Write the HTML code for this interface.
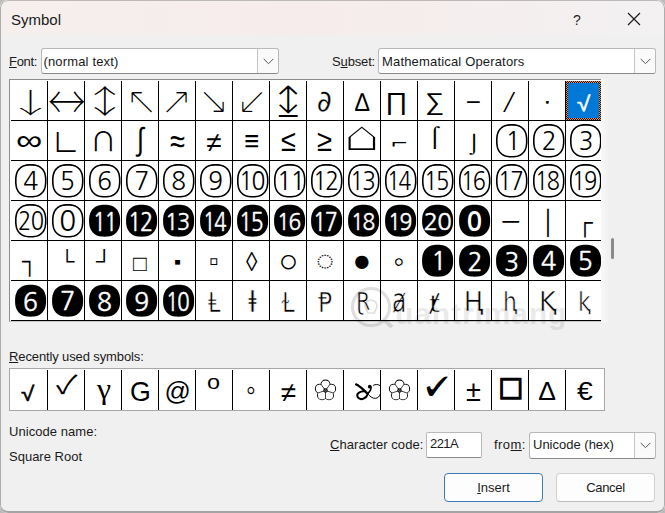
<!DOCTYPE html>
<html lang="en"><head><meta charset="utf-8"><title>Symbol</title>
<style>
html,body{margin:0;padding:0}
body{width:665px;height:513px;overflow:hidden;background:#bbb;font-family:"Liberation Sans","DejaVu Sans",sans-serif;position:relative;color:#1a1a1a}
.win{position:absolute;left:0;top:0;width:665px;height:513px;border-radius:8px;background:#f0f0f0;overflow:hidden}
.win *{position:absolute;box-sizing:border-box}
.win u,.g span{position:static}
.csvg{left:0;top:0}
.frame{left:0;top:0;width:665px;height:513px;border:1px solid #adadad;border-top-color:#bdb9b9;border-bottom:2px solid #a4a4a4;border-radius:8px;pointer-events:none}
.tb{left:0;top:0;width:665px;height:38px;background:linear-gradient(to bottom,rgba(240,240,240,0) 0,rgba(240,240,240,0) 32px,#f0f0f0 38px),linear-gradient(to right,#f5efee 0,#f6eceb 45%,#f4efef 80%,#f3f1f3 100%)}
.title{left:11px;top:10px;font-size:15px;line-height:20px;white-space:nowrap}
.help{left:573px;top:10px;font-size:15.5px;line-height:20px;transform:scaleX(.9);transform-origin:0 0}
.close{left:627px;top:12px}
.lbl{font-size:13px;line-height:15px;white-space:nowrap;color:#1a1a1a}
.combo{background:#fff;border:1px solid #b9b9b9;border-bottom-color:#8a8a8a;border-radius:3px}
.combo .ct{left:3px;top:5px;font-size:13px;line-height:15px;white-space:nowrap}
.combo .dd{right:0;top:0;width:21px;height:100%;border-left:1px solid #c4c4c4;background:#fafafa;border-radius:0 3px 3px 0}
.combo .dd svg{left:5px;top:9px}
.inp{background:#fff;border:1px solid #b9b9b9;border-bottom-color:#8a8a8a;border-radius:2px;font-size:13px;line-height:15px;padding:3px 0 0 3px}
.btn{background:#fdfdfd;border:1px solid #d0d0d0;border-bottom-color:#bcbcbc;border-radius:4px;font-size:13px;line-height:27px;text-align:center}
.btn.def{border:1px solid #3c7bb4;background:#fdfdfd}
.grid{left:9px;top:79px;width:593px;height:243px;background:#fff;border-top:1px solid #8c8c8c;border-left:1px solid #8c8c8c;border-bottom:1px solid #c8c8c8}
.gmask{left:601px;top:79px;width:9px;height:244px;background:linear-gradient(to right,#f8f8f8,#f0f0f0 8px)}
.vl{width:1px;top:81px;height:240px;background:#000}
.hl{height:1px;left:11px;width:591px;background:#000}
.g{white-space:nowrap;transform-origin:0 0;color:#000}
.sel{left:566px;top:81px;width:35px;height:39px;background:repeating-conic-gradient(#1c1408 0% 25%,#e8914a 0% 50%) 0 0/2px 2px}
.sel::after{content:"";position:absolute;left:2px;top:2px;right:2px;bottom:2px;background:#0078d7}
.sb{left:611px;top:238px;width:3px;height:21px;background:#8a8a8a;border-radius:2px}
.rgrid{left:9px;top:368px;width:596px;height:43px;background:#fff;border:1px solid #a8a8a8}
.rvl{top:370px;width:1px;height:40px;background:#000}
.tam{left:355px;top:383px}
.wm{left:350px;top:286px;width:230px;height:46px;opacity:.12}
.wm svg{left:0;top:0}
.wm span{left:45px;top:10px;font-size:30px;line-height:36px;font-weight:bold;letter-spacing:0.9px;color:#000;opacity:.65}

</style></head><body>
<div class="win">
<div class="tb"></div>
<div class="title">Symbol</div>
<div class="help">?</div>
<svg class="close" width="14" height="14" viewBox="0 0 14 14"><path d="M1 1L13 13M13 1L1 13" stroke="#1b1b1b" stroke-width="1.2" fill="none"/></svg>

<div class="lbl" style="left:9px;top:54px;letter-spacing:-0.3px"><u>F</u>ont:</div>
<div class="combo" style="left:41px;top:48px;width:238px;height:26px"><span class="ct" style="letter-spacing:0.15px;margin-left:-1.5px">(normal text)</span><span class="dd"><svg width="11" height="7" viewBox="0 0 11 7"><path d="M0.7 0.9L5.5 5.7L10.3 0.9" stroke="#555" stroke-width="1" fill="none"/></svg></span></div>
<div class="lbl" style="left:332px;top:54px;letter-spacing:-0.15px">S<u>u</u>bset:</div>
<div class="combo" style="left:378px;top:48px;width:278px;height:26px"><span class="ct" style="letter-spacing:0.17px">Mathematical Operators</span><span class="dd"><svg width="11" height="7" viewBox="0 0 11 7"><path d="M0.7 0.9L5.5 5.7L10.3 0.9" stroke="#555" stroke-width="1" fill="none"/></svg></span></div>

<div class="grid"></div>
<div class="sel"></div>
<span class="g" style="left:6.83px;top:88.07px;font-size:35.97px;line-height:35.97px;font-family:'Noto Sans CJK JP',sans-serif;font-weight:100;transform:scale(1.308,0.765);">↓</span>
<span class="g" style="left:48.20px;top:76.59px;font-size:41.49px;line-height:41.49px;font-family:'Noto Sans CJK JP',sans-serif;font-weight:100;transform:scale(0.906,1.103);">↔</span>
<span class="g" style="left:81.67px;top:83.07px;font-size:38.40px;line-height:38.40px;font-family:'Noto Sans CJK JP',sans-serif;font-weight:100;transform:scale(1.189,0.841);">↕</span>
<span class="g" style="left:124.76px;top:80.97px;font-size:40.82px;line-height:40.82px;font-family:'DejaVu Sans',sans-serif;-webkit-text-stroke:1.90px #fff;">↖</span>
<span class="g" style="left:159.20px;top:80.97px;font-size:40.82px;line-height:40.82px;font-family:'DejaVu Sans',sans-serif;-webkit-text-stroke:1.90px #fff;">↗</span>
<span class="g" style="left:196.56px;top:80.34px;font-size:40.20px;line-height:40.20px;font-family:'DejaVu Sans',sans-serif;-webkit-text-stroke:1.90px #fff;">↘</span>
<span class="g" style="left:235.50px;top:79.60px;font-size:40.00px;line-height:40.00px;font-family:'DejaVu Sans',sans-serif;-webkit-text-stroke:1.90px #fff;">↙</span>
<span class="g" style="left:267.20px;top:80.38px;font-size:45.51px;line-height:45.51px;font-family:'DejaVu Sans',sans-serif;-webkit-text-stroke:1.80px #fff;transform:scale(1.099,1.000);">↨</span>
<span class="g" style="left:316.84px;top:86.93px;font-size:29.25px;line-height:29.25px;font-family:'DejaVu Sans',sans-serif;-webkit-text-stroke:0.30px #fff;">∂</span>
<span class="g" style="left:355.00px;top:89.75px;font-size:25.65px;line-height:25.65px;font-family:'Liberation Sans',sans-serif;transform:scale(0.914,1.000);">∆</span>
<span class="g" style="left:385.38px;top:90.09px;font-size:24.44px;line-height:24.44px;font-family:'Liberation Sans',sans-serif;transform:scale(1.130,1.000);">∏</span>
<span class="g" style="left:424.90px;top:90.09px;font-size:24.44px;line-height:24.44px;font-family:'Liberation Sans',sans-serif;transform:scale(1.098,1.000);">∑</span>
<span class="g" style="left:465.70px;top:89.95px;font-size:25.92px;line-height:25.92px;font-family:'Liberation Sans',sans-serif;">−</span>
<span class="g" style="left:507.78px;top:87.76px;font-size:26.31px;line-height:26.31px;font-family:'Liberation Sans',sans-serif;transform:scale(0.908,1.102);">∕</span>
<span class="g" style="left:543.87px;top:89.09px;font-size:27.00px;line-height:27.00px;font-family:'Liberation Sans',sans-serif;transform:scale(1.000,0.909);">∙</span>
<span class="g" style="left:576.76px;top:93.96px;font-size:20.73px;line-height:20.73px;font-family:'Liberation Sans',sans-serif;color:#fff;-webkit-text-stroke:0.50px #fff;transform:scale(1.166,1.000);">√</span>
<span class="g" style="left:15.81px;top:125.59px;font-size:32.79px;line-height:32.79px;font-family:'Liberation Sans',sans-serif;transform:scale(1.133,0.883);">∞</span>
<span class="g" style="left:52.51px;top:127.93px;font-size:26.49px;line-height:26.49px;font-family:'Noto Sans CJK JP',sans-serif;">∟</span>
<span class="g" style="left:90.28px;top:127.00px;font-size:26.13px;line-height:26.13px;font-family:'Noto Sans CJK JP',sans-serif;">∩</span>
<span class="g" style="left:136.96px;top:123.13px;font-size:28.17px;line-height:28.17px;font-family:'Liberation Sans',sans-serif;transform:scale(0.892,1.121);">∫</span>
<span class="g" style="left:169.89px;top:123.93px;font-size:30.55px;line-height:30.55px;font-family:'Liberation Sans',sans-serif;transform:scale(0.889,1.125);">≈</span>
<span class="g" style="left:206.35px;top:128.73px;font-size:27.83px;line-height:27.83px;font-family:'Liberation Sans',sans-serif;">≠</span>
<span class="g" style="left:244.01px;top:125.92px;font-size:29.29px;line-height:29.29px;font-family:'Liberation Sans',sans-serif;transform:scale(0.882,1.000);">≡</span>
<span class="g" style="left:280.89px;top:125.38px;font-size:30.50px;line-height:30.50px;font-family:'Liberation Sans',sans-serif;transform:scale(0.890,1.000);">≤</span>
<span class="g" style="left:317.48px;top:125.38px;font-size:30.50px;line-height:30.50px;font-family:'Liberation Sans',sans-serif;transform:scale(0.897,1.000);">≥</span>
<span class="g" style="left:342.96px;top:115.17px;font-size:50.71px;line-height:50.71px;font-family:'DejaVu Sans',sans-serif;-webkit-text-stroke:2.20px #fff;transform:scale(1.170,0.855);">⌂</span>
<span class="g" style="left:391.31px;top:133.81px;font-size:27.71px;line-height:27.71px;font-family:'Liberation Sans',sans-serif;transform:scale(1.000,0.593);">⌐</span>
<span class="g" style="left:425.89px;top:125.90px;font-size:23.96px;line-height:23.96px;font-family:'Liberation Sans',sans-serif;transform:scale(1.193,0.839);">⌠</span>
<span class="g" style="left:466.23px;top:133.63px;font-size:22.26px;line-height:22.26px;font-family:'Liberation Sans',sans-serif;transform:scale(1.198,0.835);">⌡</span>
<span class="g" style="left:502.53px;top:209.61px;font-size:23.19px;line-height:23.19px;font-family:'Liberation Sans',sans-serif;">─</span>
<span class="g" style="left:541.85px;top:210.70px;font-size:23.39px;line-height:23.39px;font-family:'Liberation Sans',sans-serif;">│</span>
<span class="g" style="left:576.64px;top:210.27px;font-size:24.38px;line-height:24.38px;font-family:'Liberation Sans',sans-serif;transform:scale(0.905,1.000);">┌</span>
<span class="g" style="left:22.30px;top:248.91px;font-size:24.69px;line-height:24.69px;font-family:'Liberation Sans',sans-serif;transform:scale(0.872,1.000);">┐</span>
<span class="g" style="left:59.80px;top:250.95px;font-size:20.78px;line-height:20.78px;font-family:'Liberation Sans',sans-serif;">└</span>
<span class="g" style="left:95.70px;top:250.95px;font-size:20.78px;line-height:20.78px;font-family:'Liberation Sans',sans-serif;transform:scale(1.110,1.000);">┘</span>
<span class="g" style="left:132.95px;top:252.72px;font-size:22.33px;line-height:22.33px;font-family:'Liberation Sans',sans-serif;">□</span>
<span class="g" style="left:173.70px;top:253.14px;font-size:18.80px;line-height:18.80px;font-family:'Liberation Sans',sans-serif;transform:scale(1.064,1.000);">▪</span>
<span class="g" style="left:209.31px;top:247.86px;font-size:26.80px;line-height:26.80px;font-family:'Liberation Sans',sans-serif;">▫</span>
<span class="g" style="left:245.77px;top:248.23px;font-size:24.94px;line-height:24.94px;font-family:'Liberation Sans',sans-serif;transform:scale(0.919,1.088);">◊</span>
<span class="g" style="left:278.61px;top:244.62px;font-size:32.95px;line-height:32.95px;font-family:'Liberation Sans',sans-serif;">○</span>
<span class="g" style="left:316.17px;top:246.13px;font-size:28.60px;line-height:28.60px;font-family:'Liberation Sans',sans-serif;transform:scale(1.070,1.000);">◌</span>
<span class="g" style="left:352.57px;top:245.72px;font-size:30.93px;line-height:30.93px;font-family:'Liberation Sans',sans-serif;">●</span>
<span class="g" style="left:393.23px;top:244.53px;font-size:32.08px;line-height:32.08px;font-family:'Liberation Sans',sans-serif;">◦</span>
<span class="g" style="left:207.90px;top:289.69px;font-size:24.54px;line-height:24.54px;font-family:'DejaVu Sans',sans-serif;-webkit-text-stroke:0.60px #fff;transform:scale(0.917,1.091);">Ⱡ</span>
<span class="g" style="left:247.66px;top:289.19px;font-size:27.84px;line-height:27.84px;font-family:'DejaVu Sans',sans-serif;-webkit-text-stroke:0.60px #fff;transform:scale(1.153,1.000);">ⱡ</span>
<span class="g" style="left:281.93px;top:289.89px;font-size:24.76px;line-height:24.76px;font-family:'DejaVu Sans',sans-serif;-webkit-text-stroke:0.60px #fff;transform:scale(0.925,1.081);">Ɫ</span>
<span class="g" style="left:317.83px;top:289.89px;font-size:26.76px;line-height:26.76px;font-family:'DejaVu Sans',sans-serif;-webkit-text-stroke:0.60px #fff;transform:scale(0.879,1.000);">Ᵽ</span>
<span class="g" style="left:356.12px;top:289.19px;font-size:22.65px;line-height:22.65px;font-family:'DejaVu Sans',sans-serif;-webkit-text-stroke:0.60px #fff;transform:scale(0.916,1.091);">Ɽ</span>
<span class="g" style="left:391.90px;top:285.33px;font-size:27.93px;line-height:27.93px;font-family:'DejaVu Sans',sans-serif;-webkit-text-stroke:0.60px #fff;transform:scale(0.838,1.194);">ⱥ</span>
<span class="g" style="left:429.11px;top:292.83px;font-size:25.34px;line-height:25.34px;font-family:'DejaVu Sans',sans-serif;-webkit-text-stroke:0.60px #fff;transform:scale(1.128,0.887);">ⱦ</span>
<span class="g" style="left:463.71px;top:290.21px;font-size:25.75px;line-height:25.75px;font-family:'DejaVu Sans',sans-serif;-webkit-text-stroke:0.60px #fff;">Ⱨ</span>
<span class="g" style="left:502.51px;top:289.05px;font-size:24.43px;line-height:24.43px;font-family:'DejaVu Sans',sans-serif;-webkit-text-stroke:0.60px #fff;transform:scale(0.896,1.116);">ⱨ</span>
<span class="g" style="left:539.09px;top:290.21px;font-size:25.75px;line-height:25.75px;font-family:'DejaVu Sans',sans-serif;-webkit-text-stroke:0.60px #fff;">Ⱪ</span>
<span class="g" style="left:578.13px;top:288.95px;font-size:24.35px;line-height:24.35px;font-family:'DejaVu Sans',sans-serif;-webkit-text-stroke:0.60px #fff;transform:scale(0.893,1.120);">ⱪ</span>
<svg class="csvg" width="602" height="322" viewBox="0 0 602 322"><defs><path id="sqo" d="M30.7 16.7L30.7 19.0L30.5 20.6L30.3 22.1L30.0 23.4L29.6 24.7L29.1 25.8L28.5 26.9L27.8 27.9L27.1 28.7L26.2 29.5L25.3 30.3L24.3 30.9L23.3 31.4L22.1 31.8L20.8 32.2L19.4 32.4L17.9 32.6L15.8 32.6L13.6 32.6L12.1 32.4L10.7 32.2L9.4 31.8L8.2 31.4L7.2 30.9L6.2 30.3L5.3 29.5L4.4 28.7L3.7 27.9L3.0 26.9L2.4 25.8L1.9 24.7L1.5 23.4L1.2 22.1L1.0 20.6L0.8 19.0L0.8 16.7L0.8 14.4L1.0 12.8L1.2 11.3L1.5 10.0L1.9 8.7L2.4 7.6L3.0 6.5L3.7 5.5L4.4 4.7L5.3 3.9L6.2 3.1L7.2 2.5L8.2 2.0L9.4 1.6L10.7 1.2L12.1 1.0L13.6 0.8L15.7 0.8L17.9 0.8L19.4 1.0L20.8 1.2L22.1 1.6L23.3 2.0L24.3 2.5L25.3 3.1L26.2 3.9L27.1 4.7L27.8 5.5L28.5 6.5L29.1 7.6L29.6 8.7L30.0 10.0L30.3 11.3L30.5 12.8L30.7 14.4Z" fill="#fff" stroke="#000" stroke-width="1.600"/><path id="sqb" d="M31.0 16.0L31.0 18.1L30.8 19.7L30.6 21.2L30.2 22.5L29.8 23.8L29.2 25.0L28.6 26.1L27.9 27.1L27.1 28.0L26.2 28.8L25.3 29.5L24.2 30.2L23.1 30.7L21.8 31.2L20.5 31.5L19.1 31.8L17.5 31.9L15.5 32.0L13.5 31.9L11.9 31.8L10.5 31.5L9.2 31.2L7.9 30.7L6.8 30.2L5.7 29.5L4.8 28.8L3.9 28.0L3.1 27.1L2.4 26.1L1.8 25.0L1.2 23.8L0.8 22.5L0.4 21.2L0.2 19.7L0.0 18.1L0.0 16.0L0.0 13.9L0.2 12.3L0.4 10.8L0.8 9.5L1.2 8.2L1.8 7.0L2.4 5.9L3.1 4.9L3.9 4.0L4.8 3.2L5.7 2.5L6.8 1.8L7.9 1.3L9.2 0.8L10.5 0.5L11.9 0.2L13.5 0.1L15.5 0.0L17.5 0.1L19.1 0.2L20.5 0.5L21.8 0.8L23.1 1.3L24.2 1.8L25.3 2.5L26.2 3.2L27.1 4.0L27.9 4.9L28.6 5.9L29.2 7.0L29.8 8.2L30.2 9.5L30.6 10.8L30.8 12.3L31.0 13.9Z" fill="#000"/></defs><use href="#sqo" x="496.0" y="124.1"/><use href="#sqo" x="533.0" y="124.1"/><use href="#sqo" x="570.0" y="124.1"/><use href="#sqo" x="15.0" y="164.1"/><use href="#sqo" x="52.0" y="164.1"/><use href="#sqo" x="89.0" y="164.1"/><use href="#sqo" x="126.0" y="164.1"/><use href="#sqo" x="163.0" y="164.1"/><use href="#sqo" x="200.0" y="164.1"/><use href="#sqo" x="237.0" y="164.1"/><use href="#sqo" x="274.0" y="164.1"/><use href="#sqo" x="311.0" y="164.1"/><use href="#sqo" x="348.0" y="164.1"/><use href="#sqo" x="385.0" y="164.1"/><use href="#sqo" x="422.0" y="164.1"/><use href="#sqo" x="459.0" y="164.1"/><use href="#sqo" x="496.0" y="164.1"/><use href="#sqo" x="533.0" y="164.1"/><use href="#sqo" x="570.0" y="164.1"/><use href="#sqo" x="15.0" y="204.1"/><use href="#sqo" x="52.0" y="204.1"/><use href="#sqb" x="89.1" y="204.7"/><use href="#sqb" x="126.1" y="204.7"/><use href="#sqb" x="163.1" y="204.7"/><use href="#sqb" x="200.1" y="204.7"/><use href="#sqb" x="237.1" y="204.7"/><use href="#sqb" x="274.1" y="204.7"/><use href="#sqb" x="311.1" y="204.7"/><use href="#sqb" x="348.1" y="204.7"/><use href="#sqb" x="385.1" y="204.7"/><use href="#sqb" x="422.1" y="204.7"/><use href="#sqb" x="459.1" y="204.7"/><use href="#sqb" x="422.1" y="244.7"/><use href="#sqb" x="459.1" y="244.7"/><use href="#sqb" x="496.1" y="244.7"/><use href="#sqb" x="533.1" y="244.7"/><use href="#sqb" x="570.1" y="244.7"/><use href="#sqb" x="15.1" y="284.7"/><use href="#sqb" x="52.1" y="284.7"/><use href="#sqb" x="89.1" y="284.7"/><use href="#sqb" x="126.1" y="284.7"/><use href="#sqb" x="163.1" y="284.7"/></svg>
<span class="g" style="left:505.39px;top:130.11px;font-size:24.93px;line-height:24.93px;font-family:'NanumGothic','Noto Sans CJK JP',sans-serif;"><span style="letter-spacing:0">1</span></span>
<span class="g" style="left:541.74px;top:130.39px;font-size:24.61px;line-height:24.61px;font-family:'NanumGothic','Noto Sans CJK JP',sans-serif;"><span style="letter-spacing:0">2</span></span>
<span class="g" style="left:578.71px;top:129.07px;font-size:24.29px;line-height:24.29px;font-family:'NanumGothic','Noto Sans CJK JP',sans-serif;"><span style="letter-spacing:0">3</span></span>
<span class="g" style="left:23.27px;top:169.86px;font-size:24.93px;line-height:24.93px;font-family:'NanumGothic','Noto Sans CJK JP',sans-serif;"><span style="letter-spacing:0">4</span></span>
<span class="g" style="left:60.00px;top:170.14px;font-size:24.61px;line-height:24.61px;font-family:'NanumGothic','Noto Sans CJK JP',sans-serif;"><span style="letter-spacing:0">5</span></span>
<span class="g" style="left:97.22px;top:169.07px;font-size:24.29px;line-height:24.29px;font-family:'NanumGothic','Noto Sans CJK JP',sans-serif;"><span style="letter-spacing:0">6</span></span>
<span class="g" style="left:134.27px;top:170.11px;font-size:24.93px;line-height:24.93px;font-family:'NanumGothic','Noto Sans CJK JP',sans-serif;"><span style="letter-spacing:0">7</span></span>
<span class="g" style="left:171.34px;top:169.07px;font-size:24.29px;line-height:24.29px;font-family:'NanumGothic','Noto Sans CJK JP',sans-serif;"><span style="letter-spacing:0">8</span></span>
<span class="g" style="left:208.34px;top:169.07px;font-size:24.29px;line-height:24.29px;font-family:'NanumGothic','Noto Sans CJK JP',sans-serif;"><span style="letter-spacing:0">9</span></span>
<span class="g" style="left:238.54px;top:170.14px;font-size:24.61px;line-height:24.61px;font-family:'NanumGothic','Noto Sans CJK JP',sans-serif;transform:scale(0.931,1.000);"><span style="letter-spacing:-0.06em">1</span><span style="letter-spacing:-0.03em">0</span></span>
<span class="g" style="left:276.66px;top:170.11px;font-size:24.93px;line-height:24.93px;font-family:'NanumGothic','Noto Sans CJK JP',sans-serif;"><span style="letter-spacing:-0.06em">1</span><span style="letter-spacing:-0.06em">1</span></span>
<span class="g" style="left:313.18px;top:170.39px;font-size:24.61px;line-height:24.61px;font-family:'NanumGothic','Noto Sans CJK JP',sans-serif;transform:scale(0.919,1.000);"><span style="letter-spacing:-0.06em">1</span><span style="letter-spacing:-0.03em">2</span></span>
<span class="g" style="left:350.18px;top:169.07px;font-size:24.29px;line-height:24.29px;font-family:'NanumGothic','Noto Sans CJK JP',sans-serif;transform:scale(0.931,1.000);"><span style="letter-spacing:-0.06em">1</span><span style="letter-spacing:-0.03em">3</span></span>
<span class="g" style="left:387.38px;top:170.14px;font-size:22.85px;line-height:22.85px;font-family:'NanumGothic','Noto Sans CJK JP',sans-serif;transform:scale(0.929,1.077);"><span style="letter-spacing:-0.06em">1</span><span style="letter-spacing:-0.03em">4</span></span>
<span class="g" style="left:424.25px;top:170.14px;font-size:24.61px;line-height:24.61px;font-family:'NanumGothic','Noto Sans CJK JP',sans-serif;transform:scale(0.899,1.000);"><span style="letter-spacing:-0.06em">1</span><span style="letter-spacing:-0.03em">5</span></span>
<span class="g" style="left:461.32px;top:169.07px;font-size:24.29px;line-height:24.29px;font-family:'NanumGothic','Noto Sans CJK JP',sans-serif;transform:scale(0.892,1.000);"><span style="letter-spacing:-0.06em">1</span><span style="letter-spacing:-0.03em">6</span></span>
<span class="g" style="left:498.22px;top:170.11px;font-size:24.93px;line-height:24.93px;font-family:'NanumGothic','Noto Sans CJK JP',sans-serif;transform:scale(0.897,1.000);"><span style="letter-spacing:-0.06em">1</span><span style="letter-spacing:-0.03em">7</span></span>
<span class="g" style="left:535.32px;top:169.07px;font-size:24.29px;line-height:24.29px;font-family:'NanumGothic','Noto Sans CJK JP',sans-serif;transform:scale(0.892,1.000);"><span style="letter-spacing:-0.06em">1</span><span style="letter-spacing:-0.03em">8</span></span>
<span class="g" style="left:572.28px;top:169.07px;font-size:24.29px;line-height:24.29px;font-family:'NanumGothic','Noto Sans CJK JP',sans-serif;transform:scale(0.902,1.000);"><span style="letter-spacing:-0.06em">1</span><span style="letter-spacing:-0.03em">9</span></span>
<span class="g" style="left:17.68px;top:209.07px;font-size:24.29px;line-height:24.29px;font-family:'NanumGothic','Noto Sans CJK JP',sans-serif;transform:scale(0.904,1.000);"><span style="letter-spacing:-0.03em">2</span><span style="letter-spacing:-0.03em">0</span></span>
<span class="g" style="left:59.24px;top:207.63px;font-size:27.89px;line-height:27.89px;font-family:'NanumGothic','Noto Sans CJK JP',sans-serif;"><span style="letter-spacing:0">0</span></span>
<span class="g" style="left:92.67px;top:209.53px;font-size:22.77px;line-height:22.77px;font-family:'NanumGothic','Noto Sans CJK JP',sans-serif;color:#fff;-webkit-text-stroke:0.45px #fff;transform:scale(0.923,1.084);"><span style="letter-spacing:-0.06em">1</span><span style="letter-spacing:-0.06em">1</span></span>
<span class="g" style="left:127.61px;top:210.81px;font-size:24.36px;line-height:24.36px;font-family:'NanumGothic','Noto Sans CJK JP',sans-serif;color:#fff;-webkit-text-stroke:0.45px #fff;transform:scale(0.895,1.000);"><span style="letter-spacing:-0.06em">1</span><span style="letter-spacing:-0.03em">2</span></span>
<span class="g" style="left:164.61px;top:208.84px;font-size:24.05px;line-height:24.05px;font-family:'NanumGothic','Noto Sans CJK JP',sans-serif;color:#fff;-webkit-text-stroke:0.45px #fff;transform:scale(0.907,1.000);"><span style="letter-spacing:-0.06em">1</span><span style="letter-spacing:-0.03em">3</span></span>
<span class="g" style="left:202.69px;top:209.56px;font-size:22.35px;line-height:22.35px;font-family:'NanumGothic','Noto Sans CJK JP',sans-serif;color:#fff;-webkit-text-stroke:0.45px #fff;transform:scale(0.917,1.090);"><span style="letter-spacing:-0.06em">1</span><span style="letter-spacing:-0.03em">4</span></span>
<span class="g" style="left:238.67px;top:210.56px;font-size:24.36px;line-height:24.36px;font-family:'NanumGothic','Noto Sans CJK JP',sans-serif;color:#fff;-webkit-text-stroke:0.45px #fff;transform:scale(0.877,1.000);"><span style="letter-spacing:-0.06em">1</span><span style="letter-spacing:-0.03em">5</span></span>
<span class="g" style="left:276.63px;top:208.84px;font-size:24.05px;line-height:24.05px;font-family:'NanumGothic','Noto Sans CJK JP',sans-serif;color:#fff;-webkit-text-stroke:0.45px #fff;transform:scale(0.870,1.000);"><span style="letter-spacing:-0.06em">1</span><span style="letter-spacing:-0.03em">6</span></span>
<span class="g" style="left:312.64px;top:210.53px;font-size:24.68px;line-height:24.68px;font-family:'NanumGothic','Noto Sans CJK JP',sans-serif;color:#fff;-webkit-text-stroke:0.45px #fff;transform:scale(0.875,1.000);"><span style="letter-spacing:-0.06em">1</span><span style="letter-spacing:-0.03em">7</span></span>
<span class="g" style="left:350.63px;top:208.84px;font-size:24.05px;line-height:24.05px;font-family:'NanumGothic','Noto Sans CJK JP',sans-serif;color:#fff;-webkit-text-stroke:0.45px #fff;transform:scale(0.870,1.000);"><span style="letter-spacing:-0.06em">1</span><span style="letter-spacing:-0.03em">8</span></span>
<span class="g" style="left:387.60px;top:208.84px;font-size:24.05px;line-height:24.05px;font-family:'NanumGothic','Noto Sans CJK JP',sans-serif;color:#fff;-webkit-text-stroke:0.45px #fff;transform:scale(0.879,1.000);"><span style="letter-spacing:-0.06em">1</span><span style="letter-spacing:-0.03em">9</span></span>
<span class="g" style="left:423.41px;top:208.84px;font-size:24.05px;line-height:24.05px;font-family:'NanumGothic','Noto Sans CJK JP',sans-serif;color:#fff;-webkit-text-stroke:0.45px #fff;"><span style="letter-spacing:-0.03em">2</span><span style="letter-spacing:-0.03em">0</span></span>
<span class="g" style="left:466.55px;top:210.02px;font-size:25.97px;line-height:25.97px;font-family:'NanumGothic','Noto Sans CJK JP',sans-serif;font-weight:700;color:#fff;"><span style="letter-spacing:0">0</span></span>
<span class="g" style="left:431.18px;top:249.28px;font-size:25.19px;line-height:25.19px;font-family:'NanumGothic','Noto Sans CJK JP',sans-serif;color:#fff;-webkit-text-stroke:0.45px #fff;"><span style="letter-spacing:0">1</span></span>
<span class="g" style="left:467.51px;top:250.56px;font-size:24.87px;line-height:24.87px;font-family:'NanumGothic','Noto Sans CJK JP',sans-serif;color:#fff;-webkit-text-stroke:0.45px #fff;"><span style="letter-spacing:0">2</span></span>
<span class="g" style="left:504.36px;top:250.59px;font-size:24.56px;line-height:24.56px;font-family:'NanumGothic','Noto Sans CJK JP',sans-serif;color:#fff;-webkit-text-stroke:0.45px #fff;"><span style="letter-spacing:0">3</span></span>
<span class="g" style="left:540.92px;top:249.03px;font-size:25.19px;line-height:25.19px;font-family:'NanumGothic','Noto Sans CJK JP',sans-serif;color:#fff;-webkit-text-stroke:0.45px #fff;"><span style="letter-spacing:0">4</span></span>
<span class="g" style="left:577.77px;top:250.31px;font-size:24.87px;line-height:24.87px;font-family:'NanumGothic','Noto Sans CJK JP',sans-serif;color:#fff;-webkit-text-stroke:0.45px #fff;"><span style="letter-spacing:0">5</span></span>
<span class="g" style="left:22.99px;top:290.59px;font-size:24.56px;line-height:24.56px;font-family:'NanumGothic','Noto Sans CJK JP',sans-serif;color:#fff;-webkit-text-stroke:0.45px #fff;"><span style="letter-spacing:0">6</span></span>
<span class="g" style="left:60.04px;top:289.28px;font-size:25.19px;line-height:25.19px;font-family:'NanumGothic','Noto Sans CJK JP',sans-serif;color:#fff;-webkit-text-stroke:0.45px #fff;"><span style="letter-spacing:0">7</span></span>
<span class="g" style="left:97.11px;top:290.59px;font-size:24.56px;line-height:24.56px;font-family:'NanumGothic','Noto Sans CJK JP',sans-serif;color:#fff;-webkit-text-stroke:0.45px #fff;"><span style="letter-spacing:0">8</span></span>
<span class="g" style="left:134.23px;top:290.59px;font-size:24.56px;line-height:24.56px;font-family:'NanumGothic','Noto Sans CJK JP',sans-serif;color:#fff;-webkit-text-stroke:0.45px #fff;"><span style="letter-spacing:0">9</span></span>
<span class="g" style="left:165.95px;top:289.56px;font-size:22.30px;line-height:22.30px;font-family:'NanumGothic','Noto Sans CJK JP',sans-serif;color:#fff;-webkit-text-stroke:0.45px #fff;transform:scale(0.915,1.093);"><span style="letter-spacing:-0.06em">1</span><span style="letter-spacing:-0.03em">0</span></span>
<i class="vl" style="left:47px"></i>
<i class="vl" style="left:84px"></i>
<i class="vl" style="left:121px"></i>
<i class="vl" style="left:158px"></i>
<i class="vl" style="left:195px"></i>
<i class="vl" style="left:232px"></i>
<i class="vl" style="left:269px"></i>
<i class="vl" style="left:306px"></i>
<i class="vl" style="left:343px"></i>
<i class="vl" style="left:380px"></i>
<i class="vl" style="left:417px"></i>
<i class="vl" style="left:454px"></i>
<i class="vl" style="left:491px"></i>
<i class="vl" style="left:528px"></i>
<i class="vl" style="left:565px"></i>
<i class="hl" style="top:120px"></i>
<i class="hl" style="top:160px"></i>
<i class="hl" style="top:200px"></i>
<i class="hl" style="top:240px"></i>
<i class="hl" style="top:280px"></i>
<i class="hl" style="top:320px"></i>
<div class="gmask"></div>
<div class="sb"></div>

<div class="lbl" style="left:9px;top:349px;letter-spacing:-0.12px"><u>R</u>ecently used symbols:</div>
<div class="rgrid"></div>
<span class="g" style="left:21.46px;top:383.83px;font-size:22.19px;line-height:22.19px;font-family:'Liberation Sans',sans-serif;-webkit-text-stroke:0.60px #000;transform:scale(1.090,0.918);">√</span>
<span class="g" style="left:56.00px;top:370.14px;font-size:28.34px;line-height:28.34px;font-family:'Noto Sans CJK JP',sans-serif;transform:scale(1.105,0.905);">✓</span>
<span class="g" style="left:96.70px;top:373.96px;font-size:29.85px;line-height:29.85px;font-family:'Liberation Serif',serif;transform:scale(1.061,1.000);">γ</span>
<span class="g" style="left:129.96px;top:379.09px;font-size:26.76px;line-height:26.76px;font-family:'Liberation Sans',sans-serif;">G</span>
<span class="g" style="left:164.41px;top:378.59px;font-size:25.93px;line-height:25.93px;font-family:'Liberation Sans',sans-serif;">@</span>
<span class="g" style="left:207.36px;top:372.10px;font-size:20.00px;line-height:20.00px;font-family:'Liberation Sans',sans-serif;transform:scale(1.170,1.000);">o</span>
<span class="g" style="left:246.05px;top:373.93px;font-size:30.42px;line-height:30.42px;font-family:'Liberation Sans',sans-serif;transform:scale(0.904,1.000);">◦</span>
<span class="g" style="left:280.70px;top:378.73px;font-size:27.83px;line-height:27.83px;font-family:'Liberation Sans',sans-serif;">≠</span>
<span class="g" style="left:421.22px;top:367.95px;font-size:38.96px;line-height:38.96px;font-family:'DejaVu Sans',sans-serif;-webkit-text-stroke:1.90px #fff;">✔</span>
<span class="g" style="left:465.89px;top:377.05px;font-size:29.00px;line-height:29.00px;font-family:'Liberation Sans',sans-serif;transform:scale(0.936,1.000);">±</span>
<span class="g" style="left:498.17px;top:375.76px;font-size:28.18px;line-height:28.18px;font-family:'DejaVu Sans',sans-serif;-webkit-text-stroke:1.30px #000;">☐</span>
<span class="g" style="left:538.27px;top:378.31px;font-size:26.52px;line-height:26.52px;font-family:'Liberation Sans',sans-serif;">Δ</span>
<span class="g" style="left:577.12px;top:378.68px;font-size:25.77px;line-height:25.77px;font-family:'Liberation Sans',sans-serif;transform:scale(1.098,1.000);">€</span>
<svg class="tam" width="25" height="19" viewBox="0 0 25 19"><g fill="none" stroke="#000" stroke-linecap="round"><path d="M1.300 1.500C4.500 3 8.500 6.500 12.600 10.800" stroke-width="2.400"/><path d="M0.600 1.300L3 1.700" stroke-width="1.200"/><path d="M8.800 8.300C5 8.500 2 10 2.200 12.500C2.400 15.500 6 16.800 8.500 15.600C10.500 14.700 11.800 13.800 12 12.500" stroke-width="2.100"/><path d="M16 4.500C16.300 7 14.500 9 12.600 10.800" stroke-width="1.500"/><path d="M12.600 10.800C15 13.500 17.500 15.600 20.500 15.300C23 15 24.500 13.500 25 11.600" stroke-width="1"/><path d="M18.500 2.200C20.500 1.200 23 1.200 25 2.500" stroke-width="1"/></g><circle cx="14.800" cy="3.700" r="1.900" fill="#000"/></svg>
<svg class="fl" style="left:314.0px;top:378.8px" width="23" height="23" viewBox="0 0 23 23"><g fill="none" stroke="#111" stroke-width="1.100"><circle cx="11.50" cy="5.60" r="4.500"/><circle cx="17.11" cy="9.68" r="4.500"/><circle cx="14.97" cy="16.27" r="4.500"/><circle cx="8.03" cy="16.27" r="4.500"/><circle cx="5.89" cy="9.68" r="4.500"/></g><g fill="#fff" stroke="none"><circle cx="11.50" cy="5.60" r="3.950"/><circle cx="17.11" cy="9.68" r="3.950"/><circle cx="14.97" cy="16.27" r="3.950"/><circle cx="8.03" cy="16.27" r="3.950"/><circle cx="5.89" cy="9.68" r="3.950"/></g><g fill="none" stroke="#111" stroke-width="0.800"><path d="M12.68 9.88L15.79 5.59"/><path d="M13.40 12.12L18.44 13.76"/><path d="M11.50 13.50L11.50 18.80"/><path d="M9.60 12.12L4.56 13.76"/><path d="M10.32 9.88L7.21 5.59"/><circle cx="11.500" cy="11.500" r="1.900"/></g><circle cx="11.500" cy="11.700" r="0.800" fill="#2a2a2a"/></svg><svg class="fl" style="left:387.5px;top:378.8px" width="23" height="23" viewBox="0 0 23 23"><g fill="none" stroke="#111" stroke-width="1.100"><circle cx="11.50" cy="5.60" r="4.500"/><circle cx="17.11" cy="9.68" r="4.500"/><circle cx="14.97" cy="16.27" r="4.500"/><circle cx="8.03" cy="16.27" r="4.500"/><circle cx="5.89" cy="9.68" r="4.500"/></g><g fill="#fff" stroke="none"><circle cx="11.50" cy="5.60" r="3.950"/><circle cx="17.11" cy="9.68" r="3.950"/><circle cx="14.97" cy="16.27" r="3.950"/><circle cx="8.03" cy="16.27" r="3.950"/><circle cx="5.89" cy="9.68" r="3.950"/></g><g fill="none" stroke="#111" stroke-width="0.800"><path d="M12.68 9.88L15.79 5.59"/><path d="M13.40 12.12L18.44 13.76"/><path d="M11.50 13.50L11.50 18.80"/><path d="M9.60 12.12L4.56 13.76"/><path d="M10.32 9.88L7.21 5.59"/><circle cx="11.500" cy="11.500" r="1.900"/></g><circle cx="11.500" cy="11.700" r="0.800" fill="#2a2a2a"/></svg>
<i class="rvl" style="left:47px"></i>
<i class="rvl" style="left:84px"></i>
<i class="rvl" style="left:121px"></i>
<i class="rvl" style="left:158px"></i>
<i class="rvl" style="left:195px"></i>
<i class="rvl" style="left:232px"></i>
<i class="rvl" style="left:269px"></i>
<i class="rvl" style="left:306px"></i>
<i class="rvl" style="left:343px"></i>
<i class="rvl" style="left:380px"></i>
<i class="rvl" style="left:417px"></i>
<i class="rvl" style="left:454px"></i>
<i class="rvl" style="left:491px"></i>
<i class="rvl" style="left:528px"></i>
<i class="rvl" style="left:565px"></i>

<div class="lbl" style="left:9px;top:424px;letter-spacing:0.05px">Unicode name:</div>
<div class="lbl" style="left:9px;top:449px">Square Root</div>

<div class="lbl" style="left:330px;top:437px;letter-spacing:0.06px"><u>C</u>haracter code:</div>
<div class="inp" style="left:426px;top:432px;width:56px;height:26px;letter-spacing:-0.6px">221A</div>
<div class="lbl" style="left:494px;top:437px;letter-spacing:0.45px">fro<u>m</u>:</div>
<div class="combo" style="left:529px;top:432px;width:127px;height:27px"><span class="ct" style="top:4px">Unicode (hex)</span><span class="dd"><svg width="11" height="7" viewBox="0 0 11 7"><path d="M0.7 0.9L5.5 5.7L10.3 0.9" stroke="#555" stroke-width="1" fill="none"/></svg></span></div>

<div class="btn def" style="left:444px;top:473px;width:99px;height:29px"><u>I</u>nsert</div>
<div class="btn" style="left:556px;top:473px;width:99px;height:29px;letter-spacing:-0.3px">Cancel</div>
<div class="wm"><svg width="48" height="46" viewBox="0 0 48 46"><circle cx="21" cy="21" r="18.5" fill="none" stroke="#000" stroke-width="3.2"/><path d="M33 33L42 41" stroke="#000" stroke-width="4" fill="none"/><path d="M15 20a6 6 0 1 1 12 0c0 3-2.5 4-2.5 7h-7c0-3-2.500-4-2.500-7z" fill="none" stroke="#000" stroke-width="1.6"/></svg><span>uantrimang</span></div>
<div class="frame"></div>
</div>
</body></html>
